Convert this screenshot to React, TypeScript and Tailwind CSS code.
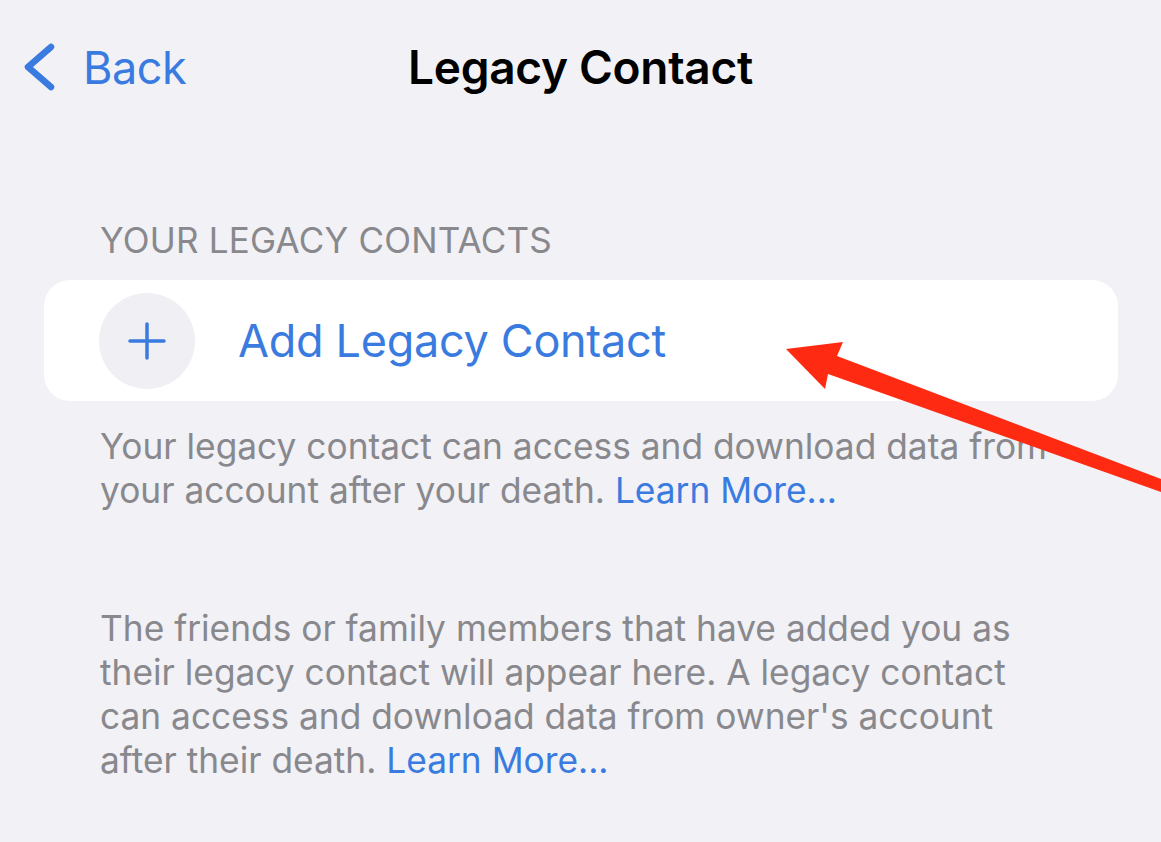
import React from 'react';

const font = { fontFamily: 'Inter, "Noto Sans", sans-serif' };

function Chevron() {
  return (
    <svg width="36" height="50" viewBox="0 0 36 50" fill="none">
      <path d="M30 5 L7 25 L30 45" stroke="#3a7be0" strokeWidth="6.5" strokeLinecap="round" strokeLinejoin="round" />
    </svg>
  );
}

function Arrow() {
  return (
    <svg className="pointer-events-none absolute inset-0" width="1161" height="842" viewBox="0 0 1161 842">
      <polygon
        points="786,349 843,342 837,356 1161,479 1161,492 828,374 825,389"
        fill="#ff2a12"
      />
    </svg>
  );
}

export default function App() {
  return (
    <div className="relative h-[842px] w-[1161px] overflow-hidden bg-[#f1f1f6]" style={font}>
      <header className="grid h-[134px] grid-cols-[1fr_auto_1fr] items-center">
        <div className="flex items-center gap-[26px] pl-[21px] text-[#3a7be0]">
          <Chevron />
          <span className="text-[45px] leading-none tracking-[-0.5px]">Back</span>
        </div>
        <h1 className="text-[46px] font-semibold leading-none tracking-[-0.3px] text-black">Legacy Contact</h1>
        <div />
      </header>

      <main className="px-[44px] pr-[43px]">
        <h2 className="mt-[86px] pl-[56px] text-[35px] uppercase leading-[40px] tracking-[0.2px] text-[#88888d]">
          Your Legacy Contacts
        </h2>

        <div className="mt-[20px] flex h-[121px] items-center gap-[43px] rounded-[26px] bg-white pl-[55px]">
          <div className="flex h-[96px] w-[96px] items-center justify-center rounded-full bg-[#efeff4]">
            <svg width="40" height="40" viewBox="0 0 40 40">
              <path d="M20 3 V37 M3 20 H37" stroke="#3a7be0" strokeWidth="3.5" strokeLinecap="round" />
            </svg>
          </div>
          <span className="text-[45px] leading-none tracking-[-0.3px] text-[#3a7be0]">Add Legacy Contact</span>
        </div>

        <p className="mt-[24px] w-[1046px] pl-[56px] text-[35.3px] leading-[44px] text-[#88888d]">
          Your legacy contact can access and download data from your account after your death.{' '}
          <span className="text-[#3a7be0]">Learn More...</span>
        </p>

        <p className="mt-[94px] w-[1006px] pl-[56px] text-[35.3px] leading-[44px] text-[#88888d]">
          The friends or family members that have added you as their legacy contact will appear here. A legacy
          contact can access and download data from owner's account after their death.{' '}
          <span className="text-[#3a7be0]">Learn More...</span>
        </p>
      </main>

      <Arrow />
    </div>
  );
}
